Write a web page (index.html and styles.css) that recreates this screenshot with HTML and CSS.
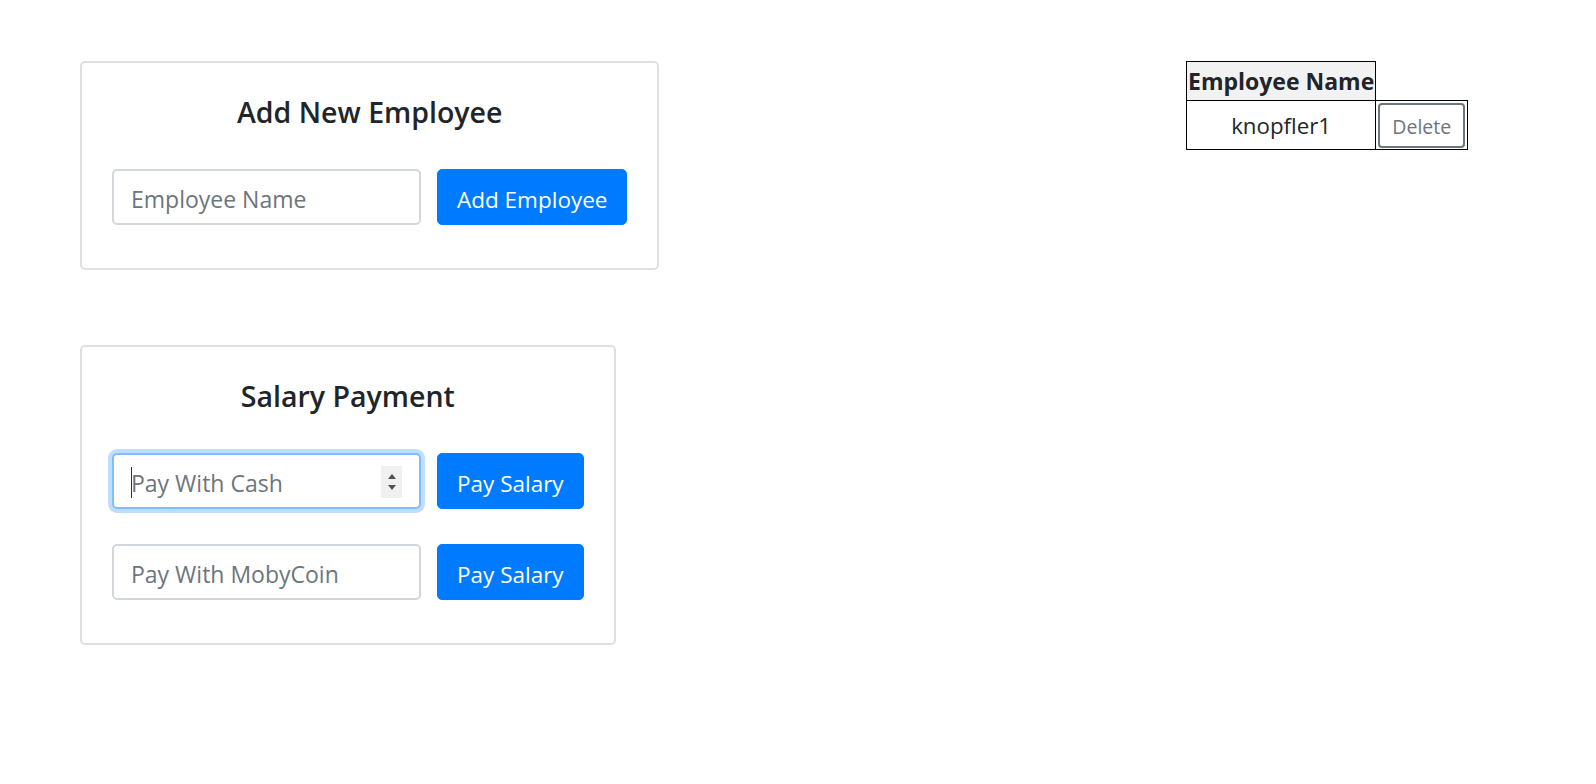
FILE: index.html
```html
<!DOCTYPE html>
<html lang="en">
<head>
<meta charset="utf-8">
<title>Employees</title>
<link rel="stylesheet" href="styles.css">
</head>
<body>
<div class="page">
  <div class="forms">
    <div class="card">
      <h3 class="card-title">Add New Employee</h3>
      <div class="row last">
        <input class="field" type="text" placeholder="Employee Name">
        <button class="btn">Add Employee</button>
      </div>
    </div>
    <div class="card">
      <h3 class="card-title">Salary Payment</h3>
      <div class="row">
        <div class="field-wrap">
          <input class="field focused" type="text" placeholder="Pay With Cash">
          <span class="caret"></span>
          <span class="spinner">
            <svg width="10" height="22" viewBox="0 0 10 22"><path d="M1 8 L5 3 L9 8 Z" fill="#505050"/><path d="M1 14 L5 19 L9 14 Z" fill="#505050"/></svg>
          </span>
        </div>
        <button class="btn">Pay Salary</button>
      </div>
      <div class="row last">
        <input class="field" type="text" placeholder="Pay With MobyCoin">
        <button class="btn">Pay Salary</button>
      </div>
    </div>
  </div>
  <div class="table-col">
    <table class="emp-table">
      <thead>
        <tr><th>Employee Name</th></tr>
      </thead>
      <tbody>
        <tr><td>knopfler1</td><td class="action"><button class="del">Delete</button></td></tr>
      </tbody>
    </table>
  </div>
</div>
</body>
</html>
```

FILE: styles.css
```css
* { box-sizing: border-box; }
html, body { margin: 0; padding: 0; background: #fff; }
body {
  font-family: "Open Sans", "Noto Sans", "Liberation Sans", sans-serif;
  color: #212529;
}
.page {
  display: grid;
  grid-template-columns: 1106px auto;
  padding: 61px 0 0 80px;
}
.forms {
  display: flex;
  flex-direction: column;
  align-items: flex-start;
  gap: 75px;
}
.card {
  border: 2px solid #e0e0e0;
  border-radius: 5px;
  padding: 30px 30px 43px 30px;
  display: flex;
  flex-direction: column;
}
.card-title {
  margin: 0 0 37px 0;
  text-align: center;
  font-size: 28.5px;
  font-weight: 600;
  line-height: 39px;
  color: #212529;
}
.row {
  display: flex;
  gap: 16px;
  margin-bottom: 35px;
}
.row.last { margin-bottom: 0; }
.field-wrap { position: relative; display: flex; }
.field {
  width: 309px;
  height: 56px;
  border: 2px solid #d3d7dc;
  border-radius: 5px;
  padding: 4px 17px 0 17px;
  font-family: inherit;
  font-size: 23px;
  color: #495057;
  background: #fff;
  outline: none;
}
.field::placeholder { color: #6c757d; opacity: 1; }
.field.focused {
  border-color: #80bdff;
  box-shadow: 0 0 0 4px rgba(0,123,255,.25);
}
.caret {
  position: absolute;
  left: 19px;
  top: 14px;
  width: 1px;
  height: 31px;
  background: #333;
}
.spinner {
  position: absolute;
  right: 19px;
  top: 13px;
  width: 21px;
  height: 32px;
  background: #f0f0f0;
  display: flex;
  align-items: center;
  justify-content: center;
}
.btn {
  height: 56px;
  padding: 4px 19px 0 19px;
  border: 1px solid #007bff;
  border-radius: 5px;
  background: #007bff;
  color: #fff;
  font-family: inherit;
  font-size: 22.5px;
  white-space: nowrap;
}
.table-col { display: flex; align-items: flex-start; }
.emp-table {
  border-collapse: collapse;
  font-size: 22.3px;
}
.emp-table th, .emp-table td {
  border: 1px solid #000;
  padding: 0 1px;
  text-align: center;
}
.emp-table th {
  background: #f2f2f2;
  font-weight: 700;
  font-size: 23px;
  height: 39px;
}
.emp-table td { height: 49px; }
.emp-table td.action { padding: 1px 2px; }
.del {
  background: #fff;
  border: 2px solid #6c757d;
  border-radius: 4px;
  color: #6c757d;
  font-family: inherit;
  font-size: 19.5px;
  height: 45px;
  padding: 2px 12px 0 12px;
}
```
